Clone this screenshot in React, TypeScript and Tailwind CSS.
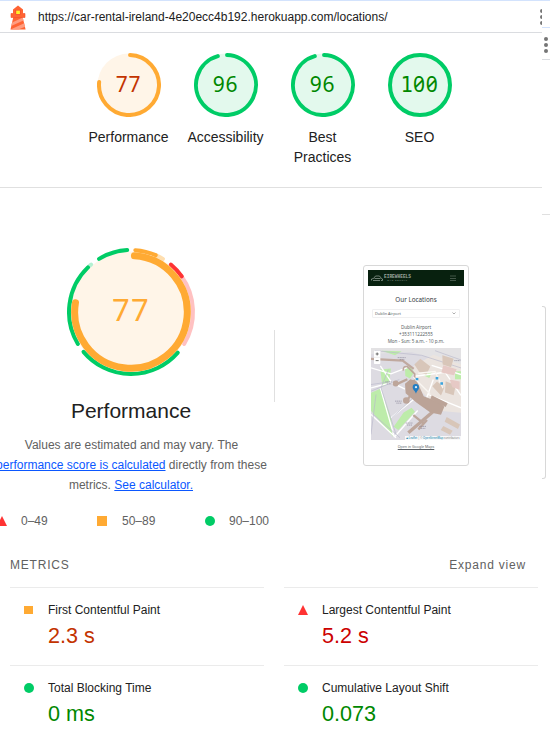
import React from 'react';

const MONO = "font-['Noto_Sans',sans-serif] [font-variant-numeric:slashed-zero]";

function arc(cx: number, cy: number, r: number, from: number, to: number) {
  const p = (deg: number) => {
    const a = ((deg - 90) * Math.PI) / 180;
    return `${(cx + r * Math.cos(a)).toFixed(2)} ${(cy + r * Math.sin(a)).toFixed(2)}`;
  };
  return `M${p(from)} A${r} ${r} 0 ${to - from > 180 ? 1 : 0} 1 ${p(to)}`;
}

function Lighthouse() {
  return (
    <svg className="ml-[10px] mt-[4px] h-[25px] w-4 shrink-0" viewBox="0 0 16 25">
      <path d="M3 4.5 8 .5l5 4v4h2v4h-2.3L15.6 24.5H.5L3.2 12.5H1v-4h2z" fill="#ff6433" />
      <path d="M2.1 17.5 12.8 12.5l.6 3L1.2 21zM.5 24.5 14.2 18.2l.8 3.5-6.6 2.8z" fill="#ff9d80" />
      <path d="M1 8.5h2M13 8.5h2v4H1v-4" fill="none" stroke="#f4512c" strokeWidth=".6" />
      <rect x="5.3" y="4.8" width="5.4" height="4.8" fill="#f4512c" />
      <rect x="6.2" y="5.6" width="3.7" height="3.4" fill="#fff02b" />
    </svg>
  );
}

function Gauge({ score, label, good }: { score: number; label: string; good: boolean }) {
  return (
    <div className="flex w-[97px] flex-col items-center">
      <div className="grid h-16 w-16 place-items-center">
        <svg className="col-start-1 row-start-1 h-16 w-16" viewBox="0 0 64 64">
          <circle cx="32" cy="32" r="31.5" fill={good ? '#e3f9ed' : '#fff5e8'} />
          {score === 100 ? (
            <circle cx="32" cy="32" r="30" fill="none" stroke="#0c6" strokeWidth="4" />
          ) : (
            <path d={arc(32, 32, 30, 2, score * 3.6 - 1.5)} fill="none" stroke={good ? '#0c6' : '#fa3'} strokeWidth="4" strokeLinecap="round" />
          )}
        </svg>
        <span className={`${MONO} col-start-1 row-start-1 mb-[2px] text-[21px] leading-6 tracking-[0.7px] ${good ? 'text-[#008800]' : 'text-[#c33300]'}`}>
          {score === 100 ? (
            <>
              <span className="font-['DejaVu_Sans_Mono',monospace] text-[20.5px] tracking-normal">1</span>00
            </>
          ) : (
            score
          )}
        </span>
      </div>
      <div className="mt-[10px] w-20 text-center text-[14px] leading-5 text-[#212121]">{label}</div>
    </div>
  );
}

const segments: [number, number, string][] = [
  [24, 31, '#ffdfb0'],
  [4, 23.5, '#fa3'],
  [54, 121, '#ffc1c1'],
  [40, 55, '#f33'],
  [131, 230, '#0c6'],
  [317, 320, '#b3f0d1'],
  [239, 316, '#0c6'],
  [329, 356.5, '#0c6'],
];

function BigGauge() {
  return (
    <div className="grid h-[130px] w-[130px] place-items-center">
      <svg className="col-start-1 row-start-1 h-[130px] w-[130px]" viewBox="0 0 130 130">
        <circle cx="65" cy="65" r="60.5" fill="#fff5e8" />
        {segments.map(([a, b, c]) => (
          <path key={a} d={arc(65, 65, 62, a, b)} fill="none" stroke={c} strokeWidth="4" strokeLinecap="round" />
        ))}
        <path d={arc(65, 65, 56.3, 3.5, 279.5)} fill="none" stroke="#fa3" strokeWidth="7" strokeLinecap="round" />
      </svg>
      <span className={`${MONO} col-start-1 row-start-1 mt-[-7px] text-[31px] leading-9 tracking-[1.3px] text-[#fa3]`}>77</span>
    </div>
  );
}

function Marker({ kind }: { kind: 'fail' | 'average' | 'pass' }) {
  if (kind === 'fail')
    return (
      <svg className="h-[10px] w-[10px] shrink-0" viewBox="0 0 10 10">
        <path d="M5 0l5 10H0z" fill="#f33" />
      </svg>
    );
  return <span className={`h-[10px] w-[10px] shrink-0 ${kind === 'pass' ? 'rounded-full bg-[#0c6]' : 'bg-[#fa3]'}`} />;
}

function AirportMap() {
  return (
    <svg className="h-[92px] w-[90px]" viewBox="48 10 270 277" preserveAspectRatio="none">
      <rect x="48" y="10" width="270" height="277" fill="#dddbe2" />
      <path d="M48 10h270v60L170 22 48 28z" fill="#e3e2e4" />
      <path d="M175 65l60-35 83 30v145l-60-5-80-80z" fill="#ebe4df" />
      <path d="M48 145l28-12 32 88 6 56-66-78zM76 75l32-3-6 42-20 12zM146 204l24-14 10 12-50 55-14-10zM150 74l15-10 12 20-12 18-14-8zM300 80h18v24h-18zM205 92l26-10-8 18zM80 18l60 2-20 12z" fill="#bdecaa" />
      <path d="M48 130l62-16 40 20M110 114l-34-50M76 130l42 148M48 210l75 70M108 220l80-65M118 278l70-80M48 70l60 18 50-20M230 62l88 28M180 95l90-12 48 70M215 160l20-55M220 150l98 40" fill="none" stroke="#fff" strokeWidth="4" />
      <path d="M48 120l55-8M100 75L78 130l45 140M48 140l85-35M55 210l80 70M110 220l60-55M48 270l15-120M60 18l140 14 118 38M240 18l78 28" fill="none" stroke="#b9b9cb" strokeWidth="2" />
      <path d="M48 43l95 5 33 25" fill="none" stroke="#c0a99f" strokeWidth="7" />
      <path d="M145 78q-2-14 12-12l22 22v20l-22 10" fill="none" stroke="#bda69b" strokeWidth="5" />
      <path d="M157 104l-30 14M165 155l-10 14M175 212l30 24M190 255l26-28" fill="none" stroke="#bda69b" strokeWidth="7" />
      <path d="M238 198l-78 67" fill="none" stroke="#bda69b" strokeWidth="10" />
      <circle cx="122" cy="117" r="9" fill="#bda69b" />
      <circle cx="154" cy="168" r="10" fill="#bda69b" />
      <path d="M150 118l16-14 20 6 20 45 50 20 12 12-10 24-32-7-42-30-32-28z" fill="#bba397" />
      <path d="M178 60l18-18 30 24-12 24-20-6zM262 32l34 10-8 26-25-8zM232 125l14-14 22 18-10 24zM275 218l40 22-6 14-40-22zM265 245l28 14-8 12-28-14zM272 110l30 12-6 30-26-8z" fill="#d8c6b9" />
      <path d="M230 152l48 24-6 12-46-24z" fill="#bba397" />
      <path d="M265 62l40 12-8 18-38-8zM284 105l30 6v25l-22-8z" fill="#e6c9c5" />
      <path d="M175 98l50 50M190 86l50-5 24 50" fill="none" stroke="#f9f6f2" strokeWidth="4" />
      <path d="M128 39h24m-18 6h14M91 112h20m-16 6h14M120 170h20m-16 6h16M152 236h22m-18 6h16M193 246h20m-16 6h14M298 48h18" stroke="#8a8598" strokeWidth="2" strokeDasharray="4 1.5" />
      <path d="M182 100h8v7h-8zM242 97h8v8h-8zM256 113h8v8h-8z" fill="#3aa3dc" />
      <path d="M183 148c-2-10-10-11-10-20a9.500 9.500 0 0119 0c0 9-7 10-9 20z" fill="#217dc3" />
      <circle cx="183" cy="128" r="3.500" fill="#d8edfa" />
      <rect x="57" y="18" width="19" height="40" rx="2" fill="#fff" />
      <path d="M57 38h19" stroke="#ccc" />
      <path d="M62 28h9m-4.500-4.500v9M62 48h9" stroke="#555" strokeWidth="2.500" />
    </svg>
  );
}

function Thumbnail() {
  return (
    <div className="flex h-[201px] w-[106px] flex-col items-center rounded-[3px] border border-[#d8d8d8] bg-white pt-1 font-['Noto_Sans',sans-serif] text-[#5a5f65]">
      <div className="flex h-[16px] w-24 items-center justify-between bg-[#08210f] pl-[3px] pr-[8px]">
        <div className="flex items-center gap-px">
          <svg className="h-[7px] w-3" viewBox="0 0 24 14" fill="none" stroke="#a9b3ab" strokeWidth="1.300">
            <path d="M1 11V8l4-1 4-5h8l4 5 2 1v3h-3M4 11h14M7 7h12" />
          </svg>
          <div className="flex flex-col items-center text-[#9ba59d]">
            <div className="font-['Liberation_Mono',monospace] text-[4.500px] font-bold leading-[4px]">EIREWHEELS</div>
            <div className="text-[2.500px] leading-[3px] tracking-[0.6px]">CAR RENTAL</div>
          </div>
        </div>
        <svg className="h-[6px] w-[6px]" viewBox="0 0 6 6" stroke="#6d7c70" strokeWidth=".6">
          <path d="M0 1h6M0 3.500h6M0 5.500h6" />
        </svg>
      </div>
      <div className="mt-[10px] text-[6.300px] leading-[8px] text-[#34393e]">Our Locations</div>
      <div className="mt-[5px] flex h-[9px] w-[88px] items-center justify-between rounded-[1px] border border-[#f0f0f1] pl-[2px] pr-[3px]">
        <span className="text-[3.900px] leading-[5px]">Dublin Airport</span>
        <svg className="h-[3px] w-[4px]" viewBox="0 0 4 3" fill="none" stroke="#777" strokeWidth=".6">
          <path d="M.5.5L2 2 3.500.500" />
        </svg>
      </div>
      <div className="mt-[6px] text-center text-[4.600px] leading-[7px] tracking-[-0.03px]">
        <div>Dublin Airport</div>
        <div>+353111222555</div>
        <div>Mon - Sun: 5 a.m. - 10 p.m.</div>
      </div>
      <div className="mr-px mt-[3px] grid">
        <div className="col-start-1 row-start-1">
          <AirportMap />
        </div>
        <div className="col-start-1 row-start-1 self-end justify-self-end bg-white/80 px-px text-[2.700px] leading-[4px] text-[#777]">
          <span className="text-[#0078a8]">▰ Leaflet</span> | © <span className="text-[#0078a8]">OpenStreetMap</span> contributors
        </div>
      </div>
      <div className="mt-[4px] text-[3.600px] leading-[6px] underline decoration-[0.5px]">Open in Google Maps</div>
    </div>
  );
}

function Metric({ kind, title, value, tone }: { kind: 'fail' | 'average' | 'pass'; title: string; value: string; tone: string }) {
  return (
    <div className="flex h-[78px] border-t border-[#ebebeb] pl-[14px] pt-[17px]">
      <div className="w-6 shrink-0">
        <div className="flex">
          {kind === 'average' ? <span className="mt-px h-2 w-[9px] bg-[#fa3]" /> : <Marker kind={kind} />}
        </div>
      </div>
      <div>
        <div className="mt-[-4px] text-[12px] leading-[18px] text-[#212121]">{title}</div>
        <div className={`mt-[3px] text-[21.600px] leading-7 ${tone}`}>{value}</div>
      </div>
    </div>
  );
}

function Dots({ className }: { className: string }) {
  return (
    <svg className={className} viewBox="0 0 4 16" fill="#757575">
      <circle cx="2" cy="2" r="2" />
      <circle cx="2" cy="8" r="2" />
      <circle cx="2" cy="14" r="2" />
    </svg>
  );
}

export default function App() {
  return (
    <div className="flex h-[737px] w-[550px] overflow-hidden border-t border-[#d3e3fd] bg-white font-['Liberation_Sans',Arial,sans-serif]">
      <main className="w-[542px] shrink-0 overflow-hidden">
        <header className="flex h-8 border-b border-[#dadce0]">
          <Lighthouse />
          <div className="ml-3 mt-[7px] whitespace-nowrap text-[12px] leading-[18px] text-[#212121]">
            https://car-rental-ireland-4e20ecc4b192.herokuapp.com/locations/
          </div>
          <Dots className="-mr-[2px] ml-auto mt-2 h-4 w-1 shrink-0" />
        </header>

        <section className="flex h-[155px] border-b border-[#e0e0e0] pl-20 pt-5">
          <Gauge score={77} label="Performance" good={false} />
          <Gauge score={96} label="Accessibility" good />
          <Gauge score={96} label="Best Practices" good />
          <Gauge score={100} label="SEO" good />
        </section>

        <section className="flex h-[358px]">
          <div className="flex w-[274px] shrink-0 flex-col">
            <div className="-ml-[6px] flex w-[274px] flex-col items-center pt-[59px]">
              <BigGauge />
              <div className="mt-[20px] text-[21px] leading-7 text-[#212121]">Performance</div>
              <div className="mt-[10px] whitespace-nowrap text-center text-[12px] leading-5 text-[#616161]">
                <div className="pl-px">Values are estimated and may vary. The</div>
                <div className="pl-px">
                  <a className="text-[#0b57ff] underline">performance score is calculated</a> directly from these
                </div>
                <div>
                  metrics. <a className="text-[#0b57ff] underline">See calculator.</a>
                </div>
              </div>
            </div>
            <div className="-ml-[3px] mt-[17px] flex items-center text-[12px] leading-[18px] text-[#616161]">
              <div className="flex w-[100px] items-center gap-[14px]">
                <Marker kind="fail" />
                0–49
              </div>
              <div className="flex w-[108px] items-center gap-[15px]">
                <Marker kind="average" />
                50–89
              </div>
              <div className="flex items-center gap-[14px]">
                <Marker kind="pass" />
                90–100
              </div>
            </div>
          </div>
          <div className="mt-[142px] h-[72px] w-px bg-[#e0e0e0]" />
          <div className="ml-[88px] mt-[77px]">
            <Thumbnail />
          </div>
        </section>

        <section className="pl-[10px] pr-[4px]">
          <div className="flex h-[41px] justify-between pr-[12px] pt-[10px] text-[12px] leading-[18px] text-[#616161]">
            <div className="tracking-[0.8px]">METRICS</div>
            <div className="tracking-[0.8px]">Expand view</div>
          </div>
          <div className="grid grid-cols-2 gap-x-5">
            <Metric kind="average" title="First Contentful Paint" value="2.3 s" tone="text-[#c33300]" />
            <Metric kind="fail" title="Largest Contentful Paint" value="5.2 s" tone="text-[#cc0000]" />
            <Metric kind="pass" title="Total Blocking Time" value="0 ms" tone="text-[#008800]" />
            <Metric kind="pass" title="Cumulative Layout Shift" value="0.073" tone="text-[#008800]" />
          </div>
        </section>
      </main>

      <aside className="w-2 shrink-0">
        <div className="h-[27px] border-b border-[#d3e3fd]" />
        <div className="h-8 border-b border-[#dadce0] pl-[2px] pt-[9px]">
          <Dots className="h-4 w-1" />
        </div>
        <div className="h-[155px] border-b border-[#e0e0e0]" />
        <div className="mt-[91px] h-[173px] w-1 rounded-r-[3px] border border-l-0 border-[#d8d8d8]" />
      </aside>
    </div>
  );
}
